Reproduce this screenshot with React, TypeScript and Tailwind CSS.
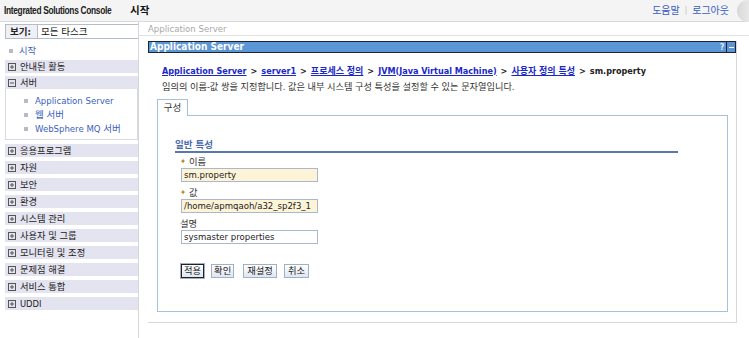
import type { ReactNode } from "react";

const ko = "font-['DejaVu_Sans_Condensed','Noto_Sans_CJK_KR',sans-serif]";

function PlusBox() {
  return (
    <svg width="8" height="8" viewBox="0 0 8 8" className="shrink-0">
      <rect x="0.5" y="0.5" width="7" height="7" fill="none" stroke="#555" />
      <path d="M2 4h4M4 2v4" stroke="#555" />
    </svg>
  );
}

function MinusBox() {
  return (
    <svg width="8" height="8" viewBox="0 0 8 8" className="shrink-0">
      <rect x="0.5" y="0.5" width="7" height="7" fill="none" stroke="#555" />
      <path d="M2 4h4" stroke="#555" />
    </svg>
  );
}

function NavGroup({ label, open }: { label: string; open?: boolean }) {
  return (
    <div className="h-[13px] bg-[#e4e4f0] flex items-center gap-[4px] pl-[3px] text-[9.3px] text-[#222] leading-none">
      {open ? <MinusBox /> : <PlusBox />}
      <span>{label}</span>
    </div>
  );
}

function Bullet() {
  return <span className="w-[4px] h-[4px] bg-[#b8b8c8] shrink-0" />;
}

function Field({ label, value, required, tinted }: { label: string; value: string; required?: boolean; tinted?: boolean }) {
  return (
    <div className="flex flex-col">
      <div className="h-[12px] flex items-center gap-[3px] text-[9.3px] text-[#333] leading-none">
        {required ? <span className="text-[#b08a20] text-[8px]">✦</span> : null}
        <span>{label}</span>
      </div>
      <div
        className={
          "ml-[1px] w-[137px] h-[14px] border border-[#a8b8d0] flex items-center px-[2px] text-[9.5px] text-[#222] leading-none overflow-hidden whitespace-nowrap " +
          (tinted ? "bg-[#fdf4d8]" : "bg-white")
        }
      >
        {value}
      </div>
    </div>
  );
}

function Btn({ children, primary, wide }: { children: ReactNode; primary?: boolean; wide?: boolean }) {
  return (
    <div
      className={
        "h-[14px] flex items-center justify-center text-[9.3px] leading-none text-[#222] bg-gradient-to-b from-[#ffffff] to-[#dfe6f0] " +
        (wide ? "px-[3px] " : "px-[2px] ") +
        (primary ? "border border-[#222] outline outline-1 outline-[#9fb0c8]" : "border border-[#9fb0c8]")
      }
    >
      {children}
    </div>
  );
}

function Crumb({ children }: { children: ReactNode }) {
  return <span className="text-[#1a28c8] underline">{children}</span>;
}

export default function App() {
  return (
    <div className={"w-[749px] h-[338px] bg-white flex flex-col overflow-hidden " + ko}>
      {/* header */}
      <div className="h-[22px] bg-[#f4f4f4] border-b border-[#dadada] flex items-center shrink-0">
        <span className="ml-[4px] w-[106px] font-['Liberation_Sans',sans-serif] font-bold text-[10px] text-[#222] tracking-[-0.4px] scale-x-[0.84] origin-left inline-block whitespace-nowrap">
          Integrated Solutions Console
        </span>
        <span className="ml-[20px] font-bold text-[10.5px] text-[#111]">시작</span>
        <div className="flex-1" />
        <span className="text-[10px] text-[#3a5fc0]">도움말</span>
        <span className="mx-[5px] text-[8px] text-[#bbb]">|</span>
        <span className="text-[10px] text-[#3a5fc0]">로그아웃</span>
        <div className="ml-[8px] w-[12px] h-[22px] rounded-l-full bg-gradient-to-r from-[#d8d8d8] to-[#e8e8e8]" />
      </div>

      <div className="flex flex-1 min-h-0">
        {/* sidebar */}
        <div className="w-[139px] shrink-0 border-r border-[#d6d6d6] pl-[5px] pt-[2px] flex flex-col">
          <div className="h-[15px] bg-[#eef0f6] border border-[#b4bccb] border-r-0 flex items-center">
            <span className="pl-[4px] w-[31px] text-[9.5px] font-bold text-[#222] leading-none">보기:</span>
            <div className="flex-1 h-full bg-white border-l border-[#b4bccb] flex items-center pl-[3px] text-[9.5px] text-[#111] leading-none">
              모든 타스크
            </div>
          </div>
          <div className="h-[14px] mt-[5px] flex items-center gap-[6px] pl-[4px] text-[9.3px] text-[#3a5fc0] leading-none">
            <Bullet />
            <span>시작</span>
          </div>
          <div className="flex flex-col gap-[3px] mt-[2px]">
            <NavGroup label="안내된 활동" />
            <div className="flex flex-col">
              <NavGroup label="서버" open />
              <div className="border border-t-0 border-[#d8d8e0] flex flex-col pt-[5px] pb-[3px]">
                {["Application Server", "웹 서버", "WebSphere MQ 서버"].map((t) => (
                  <div key={t} className="h-[14px] flex items-center gap-[7px] pl-[18px] text-[9.5px] text-[#3a5fc0] leading-none">
                    <Bullet />
                    <span>{t}</span>
                  </div>
                ))}
              </div>
            </div>
          </div>
          <div className="flex flex-col gap-[4px] mt-[4px]">
            {["응용프로그램", "자원", "보안", "환경", "시스템 관리", "사용자 및 그룹", "모니터링 및 조정", "문제점 해결", "서비스 통합", "UDDI"].map((t) => (
              <NavGroup key={t} label={t} />
            ))}
          </div>
        </div>

        {/* main */}
        <div className="flex-1 flex flex-col min-w-0">
          <div className="h-[13px] mt-[1px] pl-[9px] flex items-center text-[9.5px] text-[#a8a8a8] leading-none border-b border-[#e2e2e2]">
            Application Server
          </div>
          <div className="ml-[9px] mt-[5px] w-[589px] h-[282px] border-r border-b border-[#d8d8d8] flex flex-col">
            <div className="h-[12px] bg-[#5b96d6] border border-[#1e2430] flex items-center text-white text-[10px] font-bold leading-none">
              <span className="pl-[1px]">Application Server</span>
              <div className="flex-1" />
              <span className="w-[8px] text-center text-[9px] text-[#dfe8f4]">?</span>
              <span className="w-[9px] h-full border-l border-[#1e2430] flex items-center justify-center">
                <span className="w-[5px] h-[1px] bg-white" />
              </span>
            </div>
            <div className="pl-[14px] pt-[10px] flex flex-col">
              <div className="h-[16px] flex items-center text-[9px] font-bold text-[#222] leading-none whitespace-nowrap">
                <Crumb>Application Server</Crumb>
                <span className="mx-[4px]">&gt;</span>
                <Crumb>server1</Crumb>
                <span className="mx-[4px]">&gt;</span>
                <Crumb>프로세스 정의</Crumb>
                <span className="mx-[4px]">&gt;</span>
                <Crumb>JVM(Java Virtual Machine)</Crumb>
                <span className="mx-[4px]">&gt;</span>
                <Crumb>사용자 정의 특성</Crumb>
                <span className="mx-[4px]">&gt;</span>
                <span>sm.property</span>
              </div>
              <div className="h-[16px] flex items-center text-[9.2px] text-[#333] leading-none whitespace-nowrap">
                임의의 이름-값 쌍을 지정합니다. 값은 내부 시스템 구성 특성을 설정할 수 있는 문자열입니다.
              </div>
            </div>
            <div className="ml-[9px] mt-[4px] flex flex-col">
              <div className="w-[31px] h-[17px] border border-b-0 border-[#a8c0e0] bg-white flex items-center justify-center text-[9.5px] text-[#333] leading-none relative z-10 -mb-px">
                구성
              </div>
              <div className="w-[571px] h-[197px] border border-[#a8c0e0] flex flex-col pl-[17px] pt-[23px]">
                <div className="w-[503px] h-[14px] border-b-2 border-[#5a78b0] flex items-center text-[9.5px] font-bold text-[#4a6aac] leading-none">
                  일반 특성
                </div>
                <div className="pl-[5px] pt-[3px] flex flex-col gap-[5px]">
                  <Field label="이름" value="sm.property" required tinted />
                  <Field label="값" value="/home/apmqaoh/a32_sp2f3_1" required tinted />
                  <Field label="설명" value="sysmaster properties" />
                </div>
                <div className="pl-[6px] mt-[20px] flex gap-[7px]">
                  <Btn primary>적용</Btn>
                  <Btn>확인</Btn>
                  <div className="pl-[2px] flex gap-[7px]">
                    <Btn wide>재설정</Btn>
                    <Btn wide>취소</Btn>
                  </div>
                </div>
              </div>
            </div>
          </div>
        </div>
      </div>
    </div>
  );
}
